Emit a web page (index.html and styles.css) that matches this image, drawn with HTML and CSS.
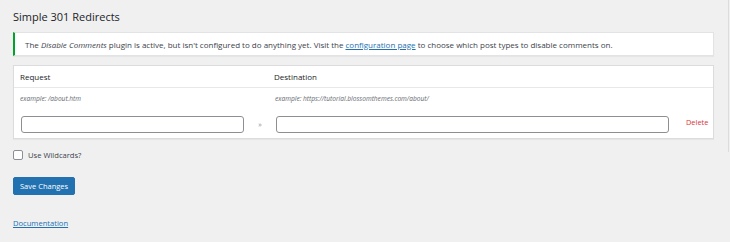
FILE: index.html
```
<!DOCTYPE html>
<html lang="en">
<head>
    <meta charset="UTF-8">
    <meta name="viewport" content="width=device-width, initial-scale=1.0">
    <title>Simple 301 Redirects</title>
    <link rel="stylesheet" href="styles.css">
</head>
<body>
    <div class="page">
        <div class="wrap">
            <h1>Simple 301 Redirects</h1>

            <div class="notice">
                <p>The <em>Disable Comments</em> plugin is active, but isn't configured to do anything yet. Visit the <a href="#">configuration page</a> to choose which post types to disable comments on.</p>
            </div>

            <div class="redirects">
                <div class="row head">
                    <div>Request</div>
                    <div></div>
                    <div>Destination</div>
                    <div></div>
                </div>
                <div class="row examples">
                    <div>example: /about.htm</div>
                    <div></div>
                    <div>example: https://tutorial.blossomthemes.com/about/</div>
                    <div></div>
                </div>
                <div class="row fields">
                    <input type="text" id="request">
                    <div class="arrow">&raquo;</div>
                    <input type="text" id="destination">
                    <a href="#" class="delete">Delete</a>
                </div>
            </div>

            <label class="wildcard"><span class="check"></span>Use Wildcards?</label>

            <button class="button-primary">Save Changes</button>

            <a href="#" class="docs">Documentation</a>
        </div>
        <div class="edge"></div>
    </div>
</body>
</html>
```
FILE: styles.css
```
body {
    margin: 0;
    background-color: #f0f0f1;
    font-family: "Open Sans", "Noto Sans", sans-serif;
    color: #3c434a;
    height: 242px;
    overflow: hidden;
}
.page {
    display: flex;
    align-items: flex-start;
}
.wrap {
    flex: 1;
    padding: 0 14px 0 13px;
}
.edge {
    width: 1px;
    height: 152px;
    margin-right: 1px;
    background-color: #dcdcde;
}
h1 {
    font-size: 11px;
    font-weight: 400;
    color: #1d2327;
    margin: 0;
    padding: 10px 0 0;
    line-height: 13px;
    height: 22px;
}
.notice {
    background-color: #fff;
    border: 1px solid #e2e3e5;
    border-left: 2px solid #00a32a;
    box-shadow: 0 1px 1px rgba(0, 0, 0, 0.04);
    height: 22px;
    display: flex;
    align-items: center;
    padding-left: 10px;
}
.notice p {
    margin: 0;
    font-size: 8px;
    color: #3c434a;
}
.notice a {
    color: #2271b1;
}
.redirects {
    margin-top: 9px;
    background-color: #fff;
    border: 1px solid #dcdcde;
    box-shadow: 0 1px 1px rgba(0, 0, 0, 0.04);
}
.row {
    display: grid;
    grid-template-columns: 223px 32px 393px 1fr;
    align-items: center;
    padding: 0 0 0 7px;
}
.row.head {
    height: 21px;
    border-bottom: 1px solid #e7e8ea;
    font-size: 8px;
    color: #1d2327;
    padding-left: 6px;
}
.row.head div:nth-child(3) {
    margin-left: -1px;
}
.row.examples {
    height: 21px;
    font-size: 6.6px;
    font-style: italic;
    color: #646970;
    padding-left: 6px;
}
.row.fields {
    height: 29px;
    align-items: start;
    padding-top: 7px;
    box-sizing: border-box;
}
.row.fields input {
    height: 17px;
    box-sizing: border-box;
    border: 1px solid #8c8f94;
    border-radius: 3px;
    margin: 0;
    padding: 0 4px;
    background-color: #fff;
}
.arrow {
    text-align: center;
    font-size: 7px;
    color: #8c8f94;
    line-height: 17px;
}
.delete {
    color: #d63638;
    font-size: 7.4px;
    text-decoration: none;
    line-height: 13px;
    padding-left: 17px;
}
.wildcard {
    display: flex;
    align-items: center;
    gap: 5px;
    margin-top: 10px;
    font-size: 7.6px;
    color: #3c434a;
    height: 11px;
}
.check {
    width: 10px;
    height: 10px;
    box-sizing: border-box;
    border: 1px solid #8c8f94;
    border-radius: 2px;
    background-color: #fff;
}
.button-primary {
    display: block;
    margin-top: 17px;
    height: 18px;
    padding: 0 6px;
    border: 1px solid #2271b1;
    border-radius: 2px;
    background-color: #2271b1;
    color: #fff;
    font-family: "Open Sans", "Noto Sans", sans-serif;
    font-size: 7.5px;
    cursor: pointer;
}
.docs {
    display: inline-block;
    margin-top: 23px;
    font-size: 7.6px;
    color: #2271b1;
}
```
